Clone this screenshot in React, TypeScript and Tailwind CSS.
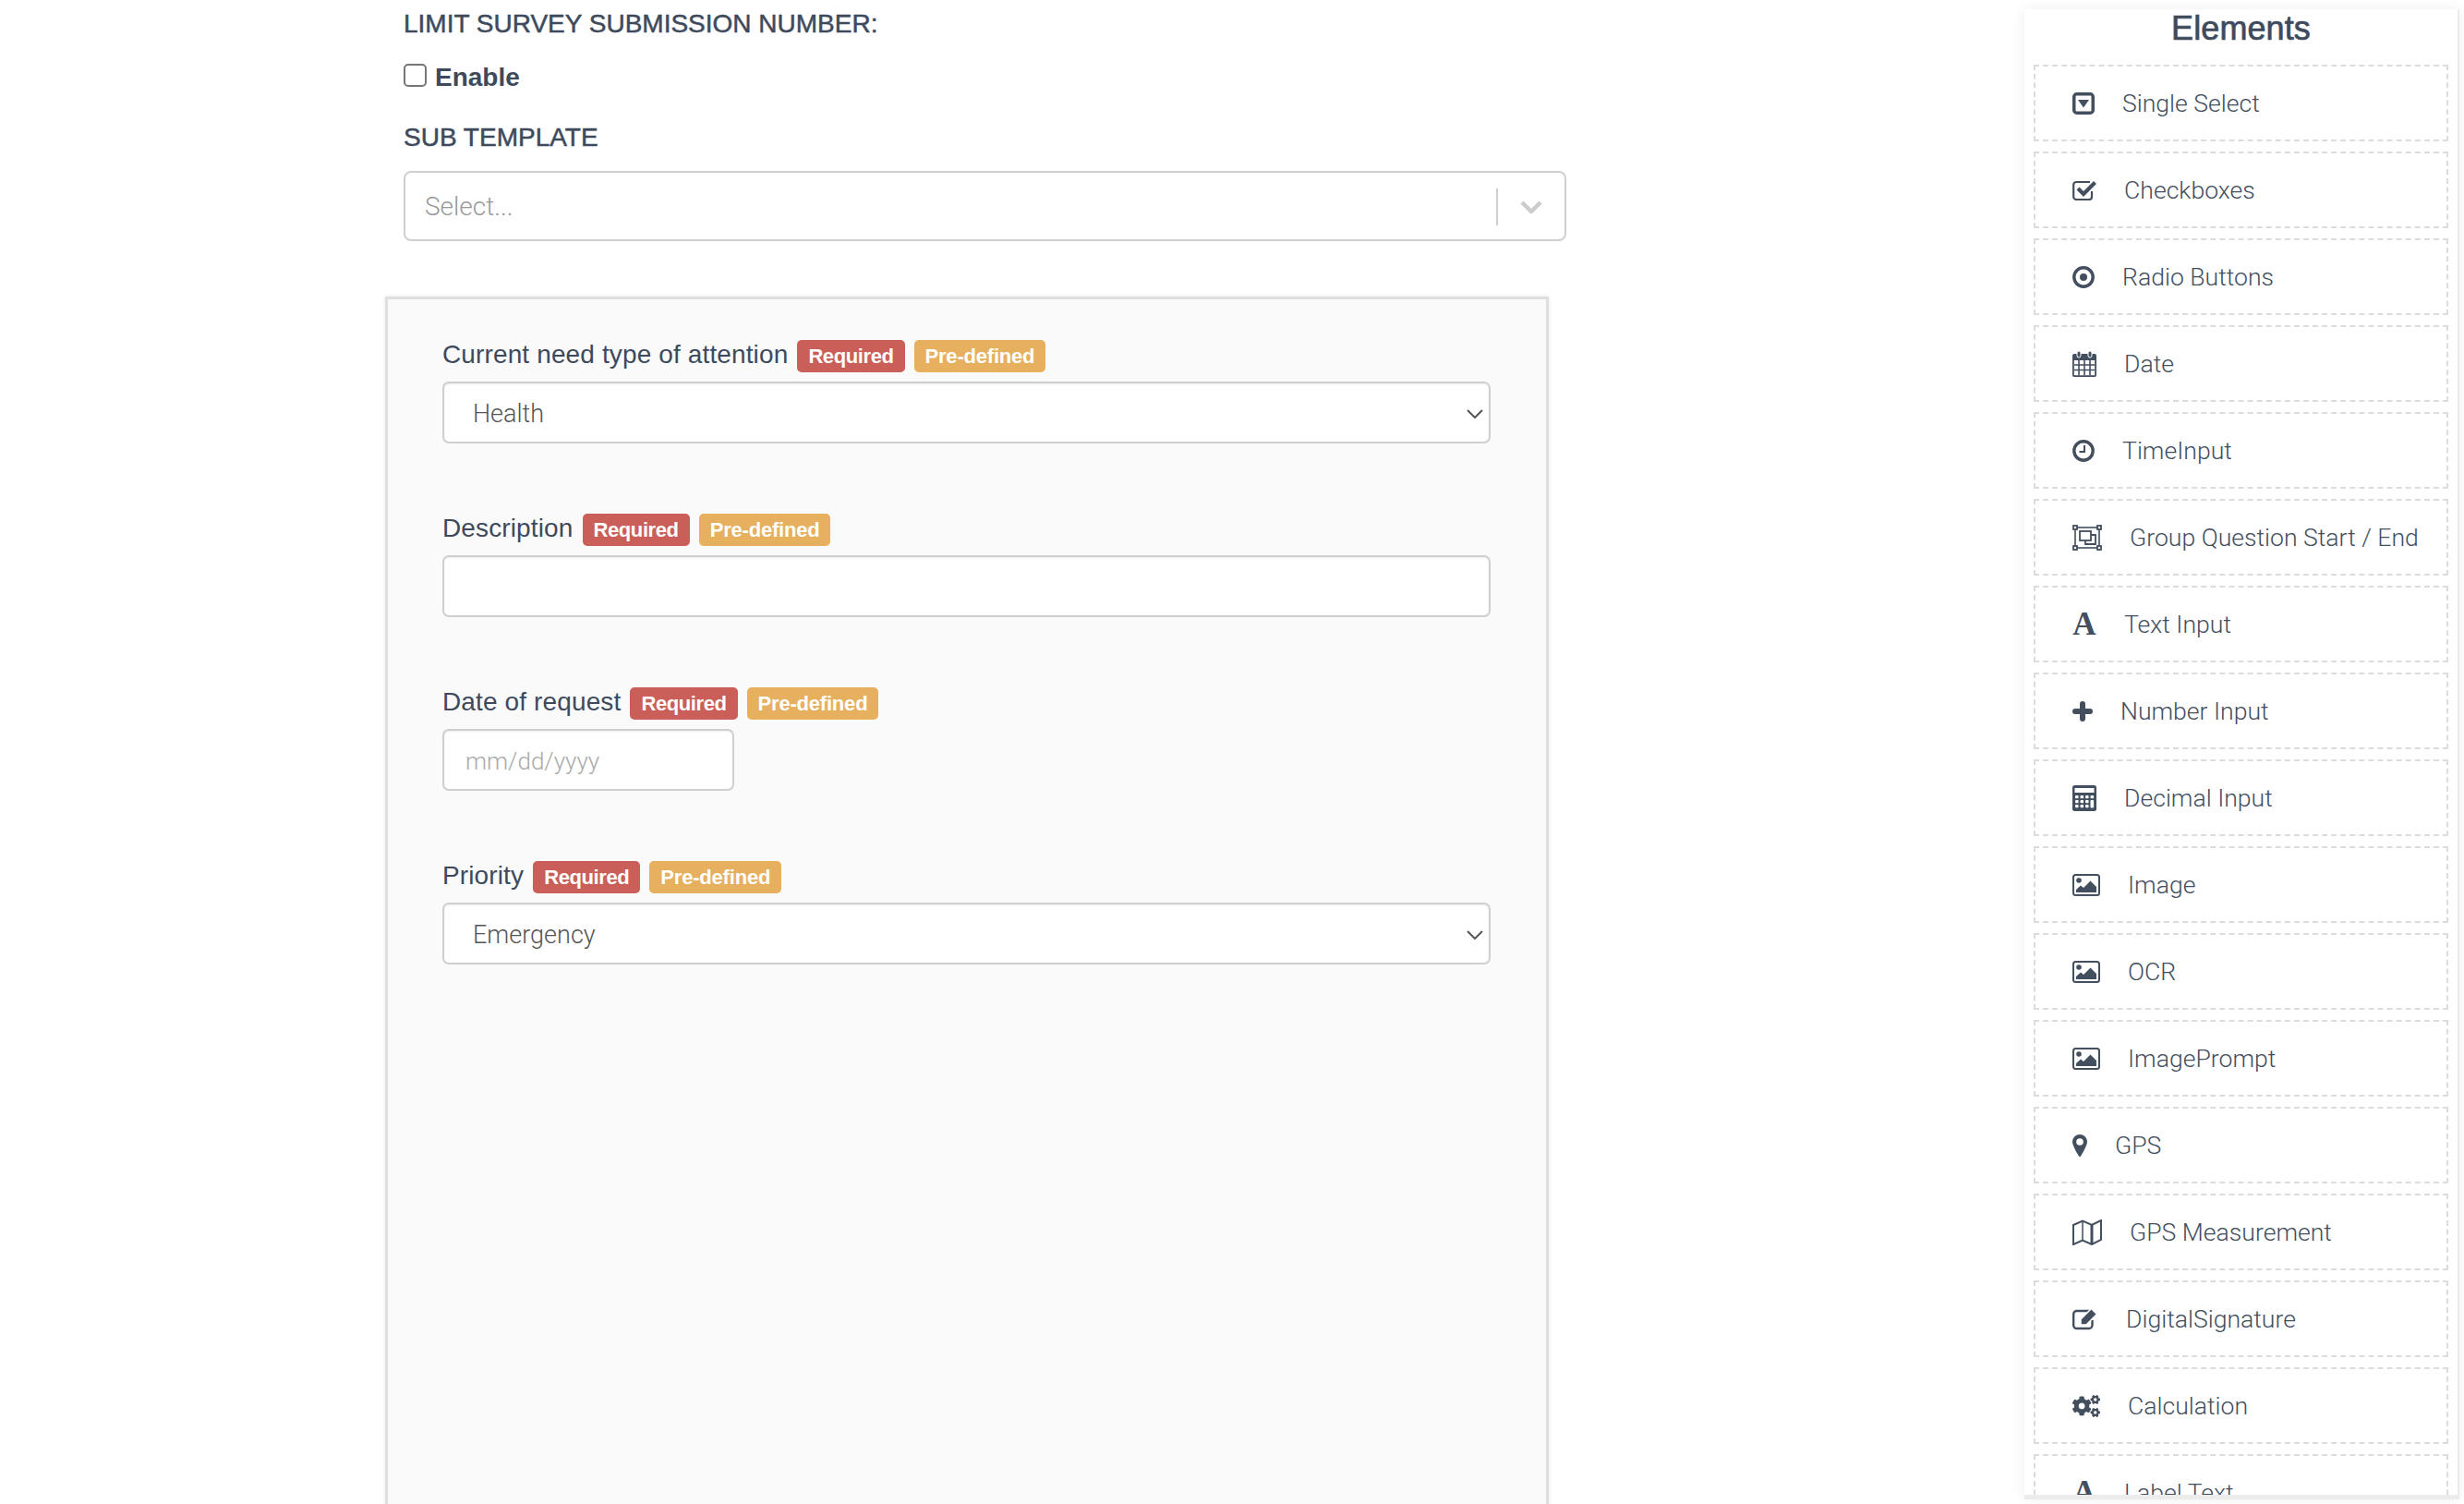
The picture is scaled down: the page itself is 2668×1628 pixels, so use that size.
import type { ReactNode } from 'react';
import { FaCogs } from 'react-icons/fa';

const c = '#434e5e';

const SelectIcon = () => (
  <svg width="24" height="24" viewBox="0 0 24 24">
    <rect x="1.75" y="1.75" width="20.5" height="20.5" rx="3" fill="none" stroke={c} strokeWidth="3.5" />
    <path d="M6 8h12l-6 8.500z" fill={c} />
  </svg>
);

const CheckIcon = () => (
  <svg width="26" height="22" viewBox="0 0 26 22">
    <path d="M19 2H4.500A3 3 0 0 0 1.200 5v13a3 3 0 0 0 3.300 3H18a3 3 0 0 0 3-3v-6" fill="none" stroke={c} strokeWidth="2.200" />
    <path d="M6 9l6 6L25 2.500" fill="none" stroke="#fff" strokeWidth="7" />
    <path d="M6 9l6 6L24.500 2.500" fill="none" stroke={c} strokeWidth="4.200" />
  </svg>
);

const RadioIcon = () => (
  <svg width="24" height="24" viewBox="0 0 24 24">
    <circle cx="12" cy="12" r="10.200" fill="none" stroke={c} strokeWidth="3.400" />
    <circle cx="12" cy="12" r="4" fill={c} />
  </svg>
);

const CalendarIcon = () => (
  <svg width="26" height="28" viewBox="0 0 26 28">
    <rect x="0" y="3" width="26" height="25" rx="2" fill={c} />
    <rect x="1.800" y="10" width="22.400" height="16.200" fill="#fff" />
    <path d="M7 10v16M13 10v16M19 10v16M2 15h22M2 20.500h22" stroke={c} strokeWidth="1.600" />
    <rect x="5" y="0" width="4" height="7" rx="2" fill={c} stroke="#fff" strokeWidth="1" />
    <rect x="17" y="0" width="4" height="7" rx="2" fill={c} stroke="#fff" strokeWidth="1" />
  </svg>
);

const ClockIcon = () => (
  <svg width="24" height="24" viewBox="0 0 24 24">
    <circle cx="12" cy="12" r="10.200" fill="none" stroke={c} strokeWidth="3.400" />
    <path d="M13 6v7H7.500" fill="none" stroke={c} strokeWidth="2" />
  </svg>
);

const GroupIcon = () => (
  <svg width="32" height="28" viewBox="0 0 32 28" fill="none" stroke={c}>
    <rect x="3" y="3" width="26" height="22" strokeWidth="1.600" />
    <rect x="1" y="1" width="4" height="4" fill="#fff" strokeWidth="1.800" />
    <rect x="27" y="1" width="4" height="4" fill="#fff" strokeWidth="1.800" />
    <rect x="1" y="23" width="4" height="4" fill="#fff" strokeWidth="1.800" />
    <rect x="27" y="23" width="4" height="4" fill="#fff" strokeWidth="1.800" />
    <rect x="8" y="7" width="12" height="10" strokeWidth="1.800" />
    <path d="M14 17v4h11v-10h-5" strokeWidth="1.800" />
  </svg>
);

const PlusIcon = () => (
  <svg width="22" height="22" viewBox="0 0 22 22">
    <path d="M11 3v16M3 11h16" stroke={c} strokeWidth="6" strokeLinecap="round" />
  </svg>
);

const CalcIcon = () => (
  <svg width="26" height="28" viewBox="0 0 26 28">
    <rect width="26" height="28" rx="2.500" fill={c} />
    <rect x="2.500" y="3" width="21" height="5" fill="#fff" />
    {[11, 16, 21].map(y =>
      [3, 8.500, 14].map(x => <rect key={`${x}-${y}`} x={x} y={y} width="3.600" height="3.200" rx="1" fill="#fff" />),
    )}
    <rect x="19.500" y="11" width="3.600" height="3.200" rx="1" fill="#fff" />
    <rect x="19.500" y="16" width="3.600" height="8.400" rx="1" fill="#fff" />
  </svg>
);

const ImageIcon = () => (
  <svg width="30" height="24" viewBox="0 0 30 24">
    <rect x="1" y="1" width="28" height="22" rx="2.500" fill="#fff" stroke={c} strokeWidth="2" />
    <circle cx="7" cy="7" r="2.800" fill={c} />
    <path d="M4 20v-3l5-4.500 3 2.500 7.500-7.500L26 14v6z" fill={c} />
  </svg>
);

const PinIcon = () => (
  <svg width="16" height="24" viewBox="0 0 16 24">
    <path fillRule="evenodd" d="M8 0a8 8 0 0 1 8 8c0 3-3.500 10-7 15.400a1.200 1.200 0 0 1-2 0C3.500 18 0 11 0 8a8 8 0 0 1 8-8zm0 4.200a3.800 3.800 0 1 0 0 7.600 3.800 3.800 0 0 0 0-7.600z" fill={c} />
  </svg>
);

const MapIcon = () => (
  <svg width="32" height="28" viewBox="0 0 32 28" fill="none" stroke={c} strokeWidth="2">
    <path d="M1 6l10-4.500 10 4.500 10-5v21l-10 5-10-4.500-10 4.500z" />
    <path d="M11 2v21" strokeWidth="1.500" />
    <path d="M21 6v21" strokeWidth="3" />
  </svg>
);

const EditIcon = () => (
  <svg width="28" height="24" viewBox="0 0 28 24">
    <path d="M20 3H5A3.500 3.500 0 0 0 1.200 6.500v12A3.500 3.500 0 0 0 5 22h13a3.500 3.500 0 0 0 3.500-3.500V13" fill="none" stroke={c} strokeWidth="2.400" />
    <path d="M9 12L20.500 .5l6 6L15 18H9z" fill={c} stroke="#fff" strokeWidth="1.500" />
  </svg>
);

const FontIcon = () => (
  <span className="w-[26px] h-[28px] flex items-center justify-center font-['Liberation_Serif'] font-bold text-[35px] leading-none text-[#434e5e]">
    A
  </span>
);

const CogsIcon = () => <FaCogs size={30} color={c} />;

const elements: { label: string; icon: ReactNode }[] = [
  { label: 'Single Select', icon: <SelectIcon /> },
  { label: 'Checkboxes', icon: <CheckIcon /> },
  { label: 'Radio Buttons', icon: <RadioIcon /> },
  { label: 'Date', icon: <CalendarIcon /> },
  { label: 'TimeInput', icon: <ClockIcon /> },
  { label: 'Group Question Start / End', icon: <GroupIcon /> },
  { label: 'Text Input', icon: <FontIcon /> },
  { label: 'Number Input', icon: <PlusIcon /> },
  { label: 'Decimal Input', icon: <CalcIcon /> },
  { label: 'Image', icon: <ImageIcon /> },
  { label: 'OCR', icon: <ImageIcon /> },
  { label: 'ImagePrompt', icon: <ImageIcon /> },
  { label: 'GPS', icon: <PinIcon /> },
  { label: 'GPS Measurement', icon: <MapIcon /> },
  { label: 'DigitalSignature', icon: <EditIcon /> },
  { label: 'Calculation', icon: <CogsIcon /> },
  { label: 'Label Text', icon: <FontIcon /> },
];

const Chevron = () => (
  <svg width="18" height="10" viewBox="0 0 18 10" className="absolute right-[8px] top-[30px] pointer-events-none">
    <path d="M1 1l8 8 8-8" fill="none" stroke="#555" strokeWidth="2" />
  </svg>
);

function FieldLabel({ children }: { children: ReactNode }) {
  return (
    <div className="flex items-center h-[35px] mb-[10px]">
      <label className="text-[28px] text-[#3e4a5c] mr-[10px] tracking-[0.13px] -mt-[3px]">{children}</label>
      <span className="h-[35px] px-[12px] flex items-center rounded-[5px] bg-[#c95f58] text-white text-[22px] font-bold tracking-[-0.4px] mr-[10px]">Required</span>
      <span className="h-[35px] px-[12px] flex items-center rounded-[5px] bg-[#e6b05f] text-white text-[22px] font-bold tracking-[-0.2px]">Pre-defined</span>
    </div>
  );
}

const inputCls = "h-[67px] bg-white border-2 border-[#cfcfcf] rounded-[7px] shadow-[inset_0_1px_2px_rgba(0,0,0,0.08)] outline-none";

function Dropdown({ value }: { value: string }) {
  return (
    <div className="relative w-[1135px]">
      <select defaultValue={value} className={`${inputCls} w-full appearance-none pl-[31px] pt-[3px] text-[27px] text-[#555] font-light font-['Roboto',sans-serif]`}>
        <option>{value}</option>
      </select>
      <Chevron />
    </div>
  );
}

export default function App() {
  return (
    <div className="flex w-[2668px] h-[1628px] overflow-hidden bg-white font-['Liberation_Sans',sans-serif] text-[#3e4a5c]">
      <main className="ml-[417px] w-[1279px] flex flex-col">
        <div className="pl-5">
          <h4 className="h-[51px] flex items-center text-[28px] [-webkit-text-stroke:0.5px_#3e4a5c]">LIMIT SURVEY SUBMISSION NUMBER:</h4>
          <label className="mt-[18px] h-[30px] flex items-center gap-[9px] text-[28px] font-bold">
            <input type="checkbox" className="appearance-none w-[25px] h-[25px] border-2 border-[#767676] rounded-[5px] bg-white -mt-[5px]" />
            Enable
          </label>
          <h4 className="mt-[35px] h-[30px] flex items-center text-[28px] [-webkit-text-stroke:0.5px_#3e4a5c]">SUB TEMPLATE</h4>
          <div className="mt-[21px] h-[76px] border-2 border-[#cfcfcf] rounded-[8px] flex items-center justify-between pl-[21px] pt-[1px] bg-white">
            <span className="text-[28px] text-[#999] font-light font-['Roboto',sans-serif]">Select...</span>
            <div className="flex items-center">
              <div className="w-[2px] h-[40px] bg-[#cfcfcf]" />
              <svg width="24" height="14" viewBox="0 0 24 14" className="mx-[24px]">
                <path d="M2 2l10 10L22 2" fill="none" stroke="#ccc" strokeWidth="4.500" />
              </svg>
            </div>
          </div>
        </div>
        <section className="mt-[60px] w-[1260px] flex-1 -mb-[20px] bg-[#fafafa] border-[3px] border-[#dfdfdf] shadow-[0_0_4px_rgba(0,0,0,0.1)] pl-[59px] pt-[44px]">
          <FieldLabel>Current need type of attention</FieldLabel>
          <Dropdown value="Health" />
          <div className="mt-[76px]">
            <FieldLabel>Description</FieldLabel>
            <input className={`${inputCls} w-[1135px]`} />
          </div>
          <div className="mt-[76px]">
            <FieldLabel>Date of request</FieldLabel>
            <input placeholder="mm/dd/yyyy" className={`${inputCls} w-[316px] pl-[23px] pt-[2px] text-[26px] font-light font-['Roboto',sans-serif] placeholder:text-[#aaa]`} />
          </div>
          <div className="mt-[76px]">
            <FieldLabel>Priority</FieldLabel>
            <Dropdown value="Emergency" />
          </div>
        </section>
      </main>
      <aside className="ml-auto mr-[5px] mt-[10px] mb-[5px] w-[471px] bg-white border-r-2 border-b-[5px] border-[#ececec] shadow-[0_0_14px_rgba(0,0,0,0.07)] flex flex-col overflow-hidden">
        <h3 className="text-center text-[36px] leading-[40px] tracking-[0.1px] text-[#3e4a5c] mt-[1px] shrink-0 [-webkit-text-stroke:0.7px_#3e4a5c]">Elements</h3>
        <div className="mt-[19px] px-[10px] flex flex-col gap-[11px] overflow-hidden">
          {elements.map(el => (
            <div key={el.label} className="h-[83px] shrink-0 border-2 border-dashed border-[#dcdcdc] pl-[40px] flex items-center gap-[30px]">
              {el.icon}
              <span className="text-[26.6px] pt-[1px] font-light text-[#434e5e] font-['Roboto',sans-serif]">{el.label}</span>
            </div>
          ))}
        </div>
      </aside>
    </div>
  );
}
